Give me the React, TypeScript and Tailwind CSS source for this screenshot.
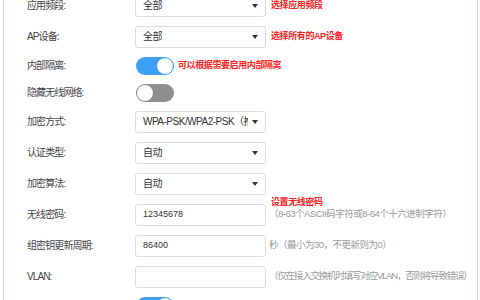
import React from "react";

type Row =
  | { kind: "select"; label: string; value: string; note?: string }
  | { kind: "toggle"; label: string; on: boolean; note?: string }
  | { kind: "input"; label: string; value: string; hint?: string; note?: string; tight?: boolean };

const rows: Row[] = [
  { kind: "select", label: "应用频段:", value: "全部", note: "选择应用频段" },
  { kind: "select", label: "AP设备:", value: "全部", note: "选择所有的AP设备" },
  { kind: "toggle", label: "内部隔离:", on: true, note: "可以根据需要启用内部隔离" },
  { kind: "toggle", label: "隐藏无线网络:", on: false },
  { kind: "select", label: "加密方式:", value: "WPA-PSK/WPA2-PSK（推荐）" },
  { kind: "select", label: "认证类型:", value: "自动" },
  { kind: "select", label: "加密算法:", value: "自动" },
  {
    kind: "input",
    label: "无线密码:",
    value: "12345678",
    hint: "（8-63个ASCII码字符或8-64个十六进制字符）",
    note: "设置无线密码",
  },
  { kind: "input", label: "组密钥更新周期:", value: "86400", hint: "秒（最小为30，不更新则为0）" },
  {
    kind: "input",
    label: "VLAN:",
    value: "",
    hint: "（仅在接入交换机时填写对应VLAN，否则将导致错误）",
    tight: true,
  },
  { kind: "toggle", label: "", on: true },
];

function Toggle({ on }: { on: boolean }) {
  return (
    <div
      className={`w-[38px] h-[18px] rounded-full flex items-center px-[1px] ${
        on ? "bg-[#3d9ff5] justify-end" : "bg-[#8e8e8e] justify-start"
      }`}
    >
      <div className="w-[16px] h-[16px] rounded-full bg-white shadow-[0_0_1px_rgba(0,0,0,0.3)]" />
    </div>
  );
}

export default function App() {
  return (
    <div className="w-[480px] h-[300px] overflow-hidden bg-white font-['Liberation_Sans','Noto_Sans_CJK_SC',sans-serif]">
      <div className="ml-[3px] w-[475px] h-[300px] overflow-hidden border-l border-r border-[#cdd8e4]">
        <div className="-mt-[10px] flex flex-col">
          {rows.map((row, idx) => (
            <div
              key={idx}
              className={`flex items-center ${row.kind === "toggle" ? "h-[27px]" : "h-[31px]"}`}
            >
              <div className="w-[131px] shrink-0 pl-[23px] text-[10px] tracking-[-0.9px] text-[#444] whitespace-nowrap">
                {row.label}
              </div>

              {row.kind === "select" && (
                <div className="w-[131px] h-[22px] shrink-0 flex items-center border border-[#dcdcdc] rounded-[3px] bg-white pl-[7px] pr-[7px]">
                  <span className="flex-1 overflow-hidden whitespace-nowrap text-[10px] tracking-[-0.5px] text-[#333]">
                    {row.value}
                  </span>
                  <span className="ml-[4px] w-0 h-0 border-l-[3px] border-r-[3px] border-t-[4px] border-l-transparent border-r-transparent border-t-[#333]" />
                </div>
              )}

              {row.kind === "input" && (
                <div className="w-[131px] h-[22px] shrink-0 flex items-center border border-[#dcdcdc] rounded-[3px] bg-white pl-[7px]">
                  <span className="text-[9px] text-[#333]">{row.value}</span>
                </div>
              )}

              {row.kind === "toggle" && (
                <div className="ml-[1px] shrink-0">
                  <Toggle on={row.on} />
                </div>
              )}

              {row.kind === "input" && row.hint && (
                <div
                  className={`relative ml-[3px] text-[9.5px] text-[#999] whitespace-nowrap ${
                    row.tight ? "tracking-[-1.2px]" : "tracking-[-0.5px]"
                  }`}
                >
                  {row.hint}
                  {row.note && (
                    <span className="absolute left-[2px] top-[-11px] text-[9px] font-bold tracking-[-0.4px] text-[#f22]">
                      {row.note}
                    </span>
                  )}
                </div>
              )}

              {row.kind !== "input" && row.note && (
                <div
                  className={`text-[9px] font-bold tracking-[-0.4px] text-[#f22] whitespace-nowrap ${
                    row.kind === "toggle" ? "ml-[4px]" : "ml-[5px]"
                  }`}
                >
                  {row.note}
                </div>
              )}
            </div>
          ))}
        </div>
      </div>
    </div>
  );
}
